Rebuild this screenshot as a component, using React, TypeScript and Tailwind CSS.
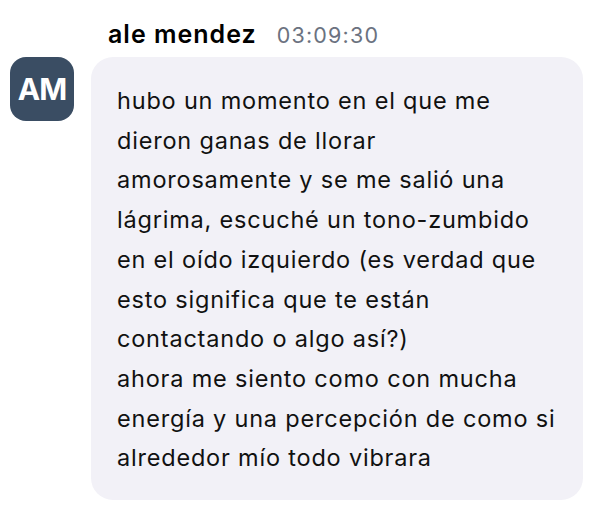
export default function App() {
  const text =
    "hubo un momento en el que me dieron ganas de llorar\namorosamente y se me salió una lágrima, escuché un tono-zumbido en el oído izquierdo (es verdad que esto significa que te están contactando o algo así?)\nahora me siento como con mucha energía y una percepción de como si alrededor mío todo vibrara";

  return (
    <div className="w-[598px] h-[515px] bg-white font-['Inter',sans-serif]">
      <div className="flex flex-col pl-[10px] pt-[16px]">
        <div className="ml-[98px] flex items-baseline gap-[20px] h-[40px]">
          <span className="text-[25px] font-semibold text-black tracking-[1px]">ale mendez</span>
          <span className="text-[21.5px] text-[#6b7280] tracking-[1.2px]">03:09:30</span>
        </div>
        <div className="flex mt-[1px]">
          <div className="w-[64px] h-[64px] shrink-0 rounded-[16px] bg-[#3a4d63] flex items-center justify-center text-white font-bold text-[30px] tracking-[-1px]">
            AM
          </div>
          <div className="ml-[17px] w-[492px] bg-[#f2f1f7] rounded-[22px] pl-[26px] pr-[24px] pt-[24px] pb-[22px] text-[23.5px] leading-[39.7px] tracking-[0.8px] text-[#111] whitespace-pre-line">
            {text}
          </div>
        </div>
      </div>
    </div>
  );
}
